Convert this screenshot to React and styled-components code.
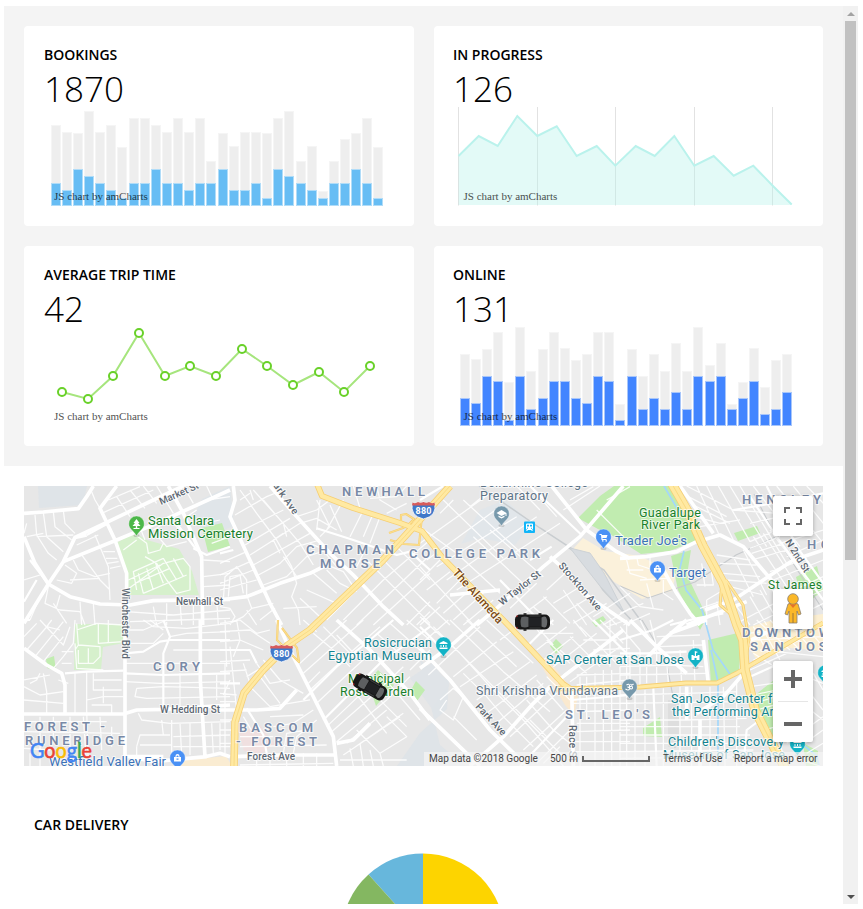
import React from "react";
import styled, { createGlobalStyle } from "styled-components";

const GlobalStyle = createGlobalStyle`
  * { box-sizing: border-box; }
  html, body { margin: 0; background: #fff; overflow: hidden; }
  body { font-family: "Open Sans", sans-serif; color: #000; }
  svg { display: block; }
`;

const Frame = styled.div`
  display: flex;
  width: 863px;
  height: 909px;
  padding: 6px 5px 5px 4px;
`;

const Content = styled.main`
  width: 839px;
  height: 898px;
  overflow: hidden;
`;

const CardGrid = styled.section`
  display: grid;
  grid-template-columns: 390px 389px;
  grid-auto-rows: 200px;
  gap: 20px;
  height: 460px;
  padding: 20px;
  background: #f4f4f4;
`;

const Card = styled.article`
  padding: 19px 0 0 ${(p) => p.$inset}px;
  background: #fff;
  border-radius: 4px;
  overflow: hidden;
`;

const Title = styled.h2`
  margin: 0;
  font-size: 14px;
  line-height: 20px;
  font-weight: 600;
`;

const Figure = styled.div`
  height: 41px;
  font-size: 35px;
  line-height: 47px;
  font-weight: 300;
`;

const ChartSvg = styled.svg`
  overflow: visible;
`;

const Credit = styled.text`
  font-family: "Liberation Serif", serif;
  font-size: 11px;
  fill: #000;
  opacity: 0.7;
`;

const ScrollTrack = styled.div`
  display: flex;
  flex-direction: column;
  align-items: center;
  width: 15px;
  height: 898px;
  background: #f1f1f1;
`;

const ScrollArrow = styled.div`
  display: flex;
  align-items: center;
  justify-content: center;
  width: 15px;
  height: 15px;
`;

const ScrollThumb = styled.div`
  width: 11px;
  height: 539px;
  margin-bottom: auto;
  background: #c1c1c1;
`;

const MapSection = styled.section`
  position: relative;
  width: 799px;
  height: 280px;
  margin: 20px 20px 0;
  overflow: hidden;
  background: #e7e7e7;
`;

const MapLabel = styled.text`
  font-family: Roboto, sans-serif;
  font-size: ${(p) => p.$size || 13}px;
  font-weight: ${(p) => p.$weight || 400};
  fill: ${(p) => p.$color};
  stroke: rgba(255, 255, 255, 0.7);
  stroke-width: 2px;
  stroke-linejoin: round;
  paint-order: stroke;
`;

const Logo = styled.text`
  font-family: Lato, sans-serif;
  font-size: 22px;
  font-weight: 400;
`;

const LogoLetter = styled.tspan`
  fill: ${(p) => p.$color};
  stroke: ${(p) => p.$color};
  stroke-width: 0.6px;
`;

const MapControls = styled.div`
  position: absolute;
  top: 10px;
  right: 10px;
  display: flex;
  flex-direction: column;
`;

const ControlButton = styled.button`
  display: flex;
  align-items: center;
  justify-content: center;
  width: 40px;
  height: 40px;
  margin: 0 0 ${(p) => p.$gap || 0}px;
  padding: 0;
  border: 0;
  border-radius: 2px;
  background: #fff;
  box-shadow: 0 1px 4px rgba(0, 0, 0, 0.3);
`;

const ZoomGroup = styled.div`
  display: flex;
  flex-direction: column;
  align-items: center;
  width: 40px;
  height: 81px;
  border-radius: 2px;
  background: #fff;
  box-shadow: 0 1px 4px rgba(0, 0, 0, 0.3);
`;

const ZoomButton = styled.button`
  display: flex;
  align-items: center;
  justify-content: center;
  width: 40px;
  height: ${(p) => p.$height}px;
  padding: 0 0 ${(p) => p.$lift}px;
  border: 0;
  background: transparent;
`;

const ZoomDivider = styled.div`
  width: 30px;
  height: 1px;
  background: #e6e6e6;
`;

const MapFooter = styled.footer`
  position: absolute;
  right: 0;
  bottom: 0;
  display: flex;
  align-items: center;
  height: 14px;
  font: 10px/14px Roboto, sans-serif;
  color: #444;
  background: rgba(245, 245, 245, 0.7);
  white-space: nowrap;
`;

const FooterCell = styled.span`
  width: ${(p) => p.$width}px;
  padding-left: 5px;
`;

const ScaleBar = styled.span`
  width: 68px;
  height: 6px;
  margin-right: 8px;
  border: solid #666;
  border-width: 0 2px 2px;
`;

const Delivery = styled.section`
  padding: 49px 30px 0;
`;

const PieSvg = styled.svg`
  margin: 18px 0 0 307px;
`;

const barX = (i) => 11 * i + (i >= 7) + (i >= 15) + (i >= 22);

function BarChart({ x, y, base, totals, values, fill, edge, credit }) {
  return (
    <ChartSvg width="350" height="100" viewBox={`${x} ${y} 350 100`} shapeRendering="crispEdges">
      {totals.map((top, i) => {
        const left = base + barX(i);
        const bottom = y + 100;
        const valueTop = values[i];
        return (
          <g key={i}>
            <rect x={left} y={top} width="10" height={bottom - top} fill="#f5f5f5" />
            <rect x={left + 1} y={top + 1} width="8" height={bottom - top - 2} fill="#eeeeee" />
            <rect x={left} y={valueTop} width="10" height={bottom - valueTop} fill={edge} />
            <rect x={left + 1} y={valueTop + 1} width="8" height={bottom - valueTop - 2} fill={fill} />
          </g>
        );
      })}
      <Credit x={credit} y={y + 94}>JS chart by amCharts</Credit>
    </ChartSvg>
  );
}

const bookingsTotals = [125, 132, 133, 111, 132, 125, 147, 118, 118, 125, 132, 118, 132, 118, 161, 133, 146, 132, 132, 133, 118, 111, 161, 146, 191, 161, 139, 133, 118, 147];
const bookingsValues = [183, 190, 169, 176, 183, 190, 198, 183, 183, 169, 183, 183, 190, 183, 183, 169, 190, 190, 183, 198, 169, 176, 183, 190, 198, 183, 183, 169, 183, 198];
const onlineTotals = [354, 359, 349, 332, 382, 327, 371, 349, 332, 348, 360, 354, 332, 332, 404, 349, 376, 354, 371, 343, 371, 327, 365, 343, 404, 382, 348, 387, 360, 354];
const onlineValues = [398, 403, 376, 381, 420, 376, 409, 398, 381, 381, 398, 403, 376, 381, 420, 376, 409, 398, 409, 392, 409, 376, 381, 376, 409, 398, 381, 414, 409, 392];

const progressLine = "458.5,156 478.7,136 497.7,146 517.3,116 537.3,136 556.7,126.3 576.7,156 596.7,146 615.3,165.7 635.7,146 654.7,156 674.3,136 694.3,165.7 713.7,156 733.7,175.7 753.3,165.7 772.7,185.7 791.7,204.5";

function AreaChart() {
  return (
    <ChartSvg width="350" height="100" viewBox="453 106 350 100">
      {[458, 537, 615, 694, 772].map((x) => (
        <rect key={x} x={x} y="107" width="1" height="98.500" fill="#e2e2e2" />
      ))}
      <polygon points={`${progressLine} 791.7,205 458.5,205`} fill="#baf2ec" fillOpacity="0.4" />
      <polyline points={progressLine} fill="none" stroke="#baf2ec" strokeWidth="2" />
      <Credit x="463.5" y="200">JS chart by amCharts</Credit>
    </ChartSvg>
  );
}

const trips = [[62, 392], [88, 399], [113, 376], [139, 333], [165, 376], [190, 366], [216, 376], [242, 349], [267, 366], [293, 385], [319, 372], [344, 392], [370, 366]];

function LineChart() {
  return (
    <ChartSvg width="350" height="100" viewBox="44 326 350 100">
      <polyline points={trips.join(" ")} fill="none" stroke="#a6e57d" strokeWidth="2" />
      {trips.map(([x, y]) => (
        <circle key={x} cx={x} cy={y} r="4" fill="#fff" stroke="#69d129" strokeWidth="2" />
      ))}
      <Credit x="54" y="420">JS chart by amCharts</Credit>
    </ChartSvg>
  );
}

/* Street geometry, drawn at three units per pixel in 200px wide tiles. */
const tiles = [
  {
    x: 20, y: 480,
    major: "M12 430L85 312L130 245L165 172L200 165M12 100L70 96L175 86L200 50L220 18M12 170L45 250L85 312L150 350L240 372L330 375L400 362L630 358M290 18L240 85L285 180L320 280L320 435M130 245L290 180L410 130L630 30M165 172L265 125L400 60L490 18M445 18L490 100L545 230L548 435",
    mid: "M200 165L265 130M520 205L560 225L630 200M470 130L530 210M12 365L50 300M85 312L30 240",
    minor: "M240 85L225 60L215 35M265 60L360 20M245 100L400 30M290 50L330 110M330 30L375 85M370 18L410 70M410 18L460 100M490 18L520 70M70 98L80 170L130 215M100 95L105 140L155 180M130 92L135 130L165 160M45 105L50 165L85 220L110 240M20 170L70 160M50 170L160 165M170 195L235 165M225 165L265 260L270 360M185 225L240 300L270 330M160 240L175 270L225 290L270 280M135 255L170 280L155 310L110 300M85 320L75 370L120 390L180 395L195 435M150 300L240 295M120 345L110 380M180 365L185 435M220 370L225 435M60 350L30 420M100 370L140 430M12 300L60 285M20 130L12 160M250 215L285 215M258 235L292 235M262 250L296 245M270 265L302 258M340 160L380 190L385 220L420 210L430 190M355 130L375 180M310 210L350 180M320 330L430 250L490 235L510 260L510 330L470 340L440 300M350 330L340 275L430 235M325 300L420 255M370 340L355 280M400 330L380 265M430 310L405 245M375 230L410 250L440 300M345 310L450 265M370 340L500 285M430 235L470 300M460 235L490 290M320 395L460 405L630 390M400 380L410 435M440 370L440 435M480 365L485 435M330 425L480 420L630 415M520 370L520 435M590 360L595 435M550 240L630 245M550 290L630 280M550 320L630 315M400 150L450 120L500 170M410 165L440 200L500 185M575 190L630 170M550 130L600 120M480 100L560 60L630 50M500 110L530 90M560 18L580 60",
  },
  {
    x: 220, y: 480,
    major: "M40 18L45 60L30 110L85 230L150 370L185 435M150 18L230 110L330 220L400 285L490 380L550 435M0 360L80 350L180 310L270 280L320 255",
    mid: "M290 145L400 180L530 225L570 215L630 270M40 210L0 220",
    minor: "M45 105L140 50L190 30M60 155L190 90M75 195L210 115M90 225L240 130M100 255L270 160M115 285L180 250L230 200L300 180M130 315L200 290L260 230L320 210M60 30L110 100L170 180L215 260L230 310L215 350L235 390L240 435M100 30L190 130L200 170M130 60L240 190L280 255M190 160L160 180L180 220M190 230L230 290M0 250L80 215M0 285L90 245M0 310L100 270M10 360L15 290L50 260L80 300L80 345M25 350L30 290L60 285L70 340M80 345L95 385L70 410L30 430M95 385L160 370M0 380L30 385L45 410L30 435M190 385L290 380M120 420L165 385M240 355L310 420M260 330L350 370M310 250L370 275L410 335M280 280L350 340M320 270L360 310L400 330M240 130L290 115L350 150M230 110L290 90L330 60M290 60L330 140L300 170M330 75L365 155M430 90L390 170M440 200L410 260M370 60L320 150M460 100L430 170M480 110L450 190M530 90L480 60L470 18M500 100L560 70M420 85L400 18M450 55L530 50L560 18M370 420L490 300L630 180M320 420L450 290M410 435L630 225M460 435L630 280M440 240L630 430M520 190L630 300M480 230L630 380M300 60L290 150M270 190L340 220M300 200L350 260M0 330L110 300M90 30L100 60M60 60L90 40M80 390L110 435M560 435L630 365M590 435L630 395",
  },
  {
    x: 420, y: 480,
    major: "M90 345L240 330M395 18L500 150L590 215L630 235M370 260L480 170L610 18M390 230L435 270L490 340L630 435M370 260L230 385L170 435",
    mid: "M0 60L70 18M330 18L485 165M240 300L370 435M330 240L395 200",
    minor: "M0 190L210 40M20 240L240 80M50 260L290 110M80 300L350 110M110 330L420 130M0 300L60 240M20 330L90 275M50 370L130 290M70 400L160 320M100 420L190 340M130 435L220 360M70 60L250 235M130 60L310 225M0 140L110 220L240 340M160 170L330 330M210 150L370 290M0 260L160 435M0 350L90 435M0 410L30 435M100 60L60 100M150 80L200 40M340 30L410 110M290 18L360 90M430 90L540 18M450 60L520 20M380 330L435 280M400 370L480 320M430 400L520 345M460 430L560 370M340 380L400 435M370 350L450 430M430 330L500 435M500 340L590 435M520 410L630 340M550 435L630 385M560 60L630 20M530 90L610 170M270 385L350 310M300 410L380 350M470 370L530 435M0 435L60 380",
  },
  {
    x: 620, y: 480,
    major: "M0 235L80 230L170 215L230 185L300 165L370 200L420 260L480 330L560 435M180 18L280 160M130 270L170 340L210 400L240 435M255 390L340 360L430 300L520 240L610 210M200 435L380 365",
    mid: "M390 50L470 170L610 360M340 90L430 75L610 40M150 435L230 415L310 400M440 18L530 200L610 310",
    minor: "M200 18L340 90L470 100M205 50L320 110M220 75L330 130M230 18L300 170M260 18L340 180M295 18L390 185M330 18L440 200M360 18L500 250M400 18L540 200M470 18L610 190M520 18L610 130M560 18L610 70M225 110L300 130M240 140L360 120M390 130L480 110M390 185L470 150M390 205L480 170M395 220L490 190M395 240L500 210M400 170L500 320M430 160L520 300M450 150L560 300M480 190L610 150M500 230L610 180M450 275L560 235M460 300L610 240M480 350L610 290M500 380L610 330M530 410L610 370M290 225L390 240M300 250L410 255M310 280L420 290M320 300L440 310M330 320L430 345M340 230L400 350M370 210L440 345M230 315L280 315L270 240M255 320L245 250M260 360L310 330M240 385L300 365M260 360L260 435M290 365L300 435M350 380L390 435M390 350L440 435M420 330L480 435M450 320L530 435M350 430L520 340M400 435L550 360M20 240L30 280L80 295M50 230L55 255L100 270M90 225L90 260L130 260M60 300L140 295M20 270L70 270M0 320L60 380L130 390M80 310L100 385M130 300L130 340L160 360M0 400L70 370M10 435L90 400",
  },
  {
    x: 20, y: 620,
    major: "M12 85L80 135L125 160L135 195L135 285M315 0L315 438M12 282L310 282L350 270L430 268L630 255M541 0L541 180L550 330L555 410L600 400L630 410M315 410L430 410M330 410L400 425L560 410",
    mid: "M135 160L200 155L310 152M315 100L370 95L420 65L450 60L630 60M315 160L430 165L630 160M430 0L450 50L430 100L430 270M12 0L30 0",
    minor: "M20 90L85 15M45 110L130 5M70 125L130 50M12 50L50 10M95 0L80 20L120 30M60 0L130 75L150 20M100 145L130 110L160 70L165 0M125 95L160 95M125 130L155 130M115 180L145 190M30 190L50 180L60 160M12 200L60 225L130 215M12 240L130 250M70 160L80 215L80 280M12 180L90 165M165 70L170 145L250 150M200 155L200 270L205 438M220 160L220 210L305 210M220 180L305 180M165 160L165 280M200 240L250 230L310 230M215 255L275 255L275 280M250 200L250 250M170 10L175 75L165 90M170 30L230 10L310 15M235 10L235 70L310 65M265 0L265 70M175 75L240 80L240 110L220 130L175 130L175 90M205 85L205 130M60 290L60 438M100 290L100 350M150 290L150 438M190 290L200 438M240 290L245 390M275 320L275 380M12 305L260 305M12 335L300 340M12 385L90 390M30 400L30 438M315 30L370 30L440 0M370 0L400 20L500 25L630 10M330 70L400 70L430 40M390 0L430 30M450 50L500 40L630 35M460 90L630 90M315 130L630 130M315 185L420 190L630 185M350 205L345 230L380 235L630 230M350 205L430 200L630 205M480 160L480 265M590 165L590 240M610 225L630 180M355 280L365 300L450 310L630 305M350 380L360 345L450 345M350 380L350 405M455 300L455 405M480 310L485 405M510 310L510 405M575 310L580 400M600 310L600 390M360 375L455 375M460 350L630 345M460 380L630 380M425 300L430 345",
  },
  {
    x: 220, y: 620,
    major: "M170 0L210 90L270 210L340 350L350 438M0 270L110 270L180 265L230 210M350 370L400 360L450 310M350 0L450 90L570 220L630 300M40 410L180 405L350 405",
    mid: "M80 265L130 345L140 400M250 240L350 140L450 60L520 0M310 300L400 210L480 130L630 20M110 130L90 90L0 90M0 190L60 190",
    minor: "M0 10L60 0L110 40L150 30M0 35L90 30L150 70M0 65L60 60L130 90M0 125L90 120M0 155L80 150M0 220L50 225M0 245L45 245M0 300L40 300M0 330L40 330M0 370L35 370M50 0L60 60L40 110M15 0L20 140M70 130L90 190M30 80L50 270M15 130L15 400M240 130L380 0M250 160L430 0M265 190L300 155M270 210L400 90L480 20M290 250L380 165L440 110M320 320L430 215M330 340L460 225L550 140M350 365L500 240L570 170M380 370L500 270M400 385L550 280M370 405L540 290M410 330L480 400L560 350L500 290M250 0L290 35M280 40L340 90L390 140M310 20L400 110M350 45L420 120M430 70L510 150M470 40L560 120M510 10L600 90M560 0L630 60M260 330L200 340L190 400M280 270L220 310L160 320M290 300L230 350L220 400M150 290L250 285M70 290L100 340M60 350L160 350M60 380L320 375M110 400L110 438M150 400L150 438M200 400L200 438M250 400L250 438M290 400L290 438M60 435L340 430M390 385L400 438M420 370L430 438M450 390L460 438M480 400L490 438M360 420L560 420M400 210L500 340M440 200L560 320M480 160L600 300M110 130L150 190L210 180M120 170L180 250M90 200L150 260L270 240M130 120L180 180L250 220M630 90L570 150M80 170L130 140",
  },
  {
    x: 420, y: 620,
    major: "M0 85L90 180L210 330L320 438M0 265L150 410L180 438M180 0L95 75L0 145M410 185L520 100L610 30M455 200L460 438M390 200L340 250L250 350L150 438",
    mid: "M300 438L440 290M400 0L320 80M520 0L620 100M0 20L60 80M455 240L630 225",
    minor: "M0 75L85 0M40 20L180 160L350 330L440 420M90 0L250 155L390 275M140 0L290 140M200 0L340 130M25 165L180 20M100 170L230 65M120 200L280 95M170 240L330 125M200 280L350 165M230 310L370 190M270 350L410 220M310 390L440 270M350 430L450 330M10 0L120 100L220 210L310 300L430 438M60 240L100 205L130 230L100 300L60 270L80 240M100 290L170 360M130 160L200 230L250 290L340 380M320 240L400 330L450 370M240 60L320 0M350 90L440 20M370 120L460 50M400 140L530 40M430 165L570 60M450 185L600 80M480 20L590 130M450 50L540 140M420 90L500 160M380 60L450 130M360 30L400 75M330 0L360 40L460 40M460 0L500 50M540 0L610 70M560 20L620 0M480 170L480 438M500 170L500 300M525 160L525 438M550 150L550 438M575 150L575 438M600 140L600 438M470 195L630 180M470 165L630 160M460 250L630 250M470 275L630 270M470 310L630 310M470 335L630 330M465 365L630 365M465 395L630 395M380 350L330 300M420 380L370 430M350 180L430 270M380 170L450 240M490 60L590 60M570 0L570 140M520 90L630 85M520 105L630 110",
  },
  {
    x: 620, y: 620,
    major: "M30 0L110 80L200 160M200 0L130 60L70 125M150 40L260 0M250 60L265 190M200 200L200 300M240 300L240 438M370 70L480 20L560 0M380 150L310 230L230 280",
    mid: "M0 60L100 30L160 0M0 100L80 100L200 95M390 170L480 130M100 205L110 438M420 300L380 330L370 438",
    minor: "M0 20L60 90L60 200M20 0L20 190M60 0L90 60M90 0L110 80M110 50L240 45M120 80L250 75M0 140L150 135L250 140M30 100L30 190M80 110L80 190M110 90L110 195M140 120L145 190M180 90L185 190M220 60L225 190M0 165L260 160M0 225L200 220L350 215M0 250L370 245M0 300L200 300L380 295M0 320L360 320M0 345L390 345M0 370L400 370M0 395L400 390M0 415L450 410M20 210L20 438M45 210L45 438M75 210L75 438M130 205L130 438M180 200L180 438M215 200L215 438M270 200L270 438M310 200L315 438M350 180L350 438M400 100L480 150M400 120L540 60M390 150L500 100M430 30L480 120M400 20L450 110M410 0L510 90M450 0L540 90M500 0L560 70M540 0L609 80M380 40L609 20M400 60L609 50M420 90L609 110M460 130L609 190M390 200L460 190M400 225L470 210M400 250L470 230M410 270L480 250M540 180L609 270M560 260L609 300M580 160L609 210M500 370L609 290M540 380L609 330M560 400L609 370M470 340L500 438M510 410L600 438M430 330L470 320",
  },
];

function Tile({ tile }) {
  return (
    <g transform={`translate(${tile.x} ${tile.y}) scale(.33333)`} fill="none" stroke="#fff" strokeLinejoin="round">
      <path d={tile.minor} strokeWidth="3.800" strokeOpacity="0.88" />
      <path d={tile.mid} strokeWidth="6.500" />
      <path d={tile.major} strokeWidth="11" />
    </g>
  );
}

const highways = [
  { d: "M450 486L406 535L383 560L310 630L288 645L263 670L244 693L235 722L234 766", w: 7.5 },
  { d: "M317 484L322 496L353 508L400 523L422 531L442 557L510 627L563 684L572 690", w: 6 },
  { d: "M556 689L640 687L686 683L717 683L737 673L780 648L823 623", w: 4.8 },
  { d: "M672 484L687 510L703 546L723 583L737 625L743 640L745 670L755 710L769 738L785 768", w: 9.5 },
  { d: "M722 582L720 605L733 616L745 630M726 580L743 605L749 640L744 668L755 700", w: 3 },
  { d: "M278 620L277 640L299 662L297 648L282 628", w: 2.2 },
  { d: "M389 533L403 528L422 516L419 545L404 544L390 540M401 515L406 514L414 519L407 526L401 522Z", w: 2.2 },
];

function Highways() {
  return (
    <g fill="none" strokeLinejoin="round">
      {highways.map((h) => <path key={h.d} d={h.d} stroke="#f6cf73" strokeWidth={h.w} />)}
      {highways.map((h) => <path key={h.d} d={h.d} stroke="#ffe9a2" strokeWidth={h.w - 1.6} />)}
      <path d={highways[0].d} stroke="#f8d77f" strokeWidth="0.8" />
      <path d={highways[3].d} stroke="#f8d77f" strokeWidth="0.9" />
    </g>
  );
}

function Parks() {
  return (
    <g>
      <path d="M38 486L87 486L83 505L39 508Z" fill="#dfe4e8" />
      <path d="M202 499L230 486L234 526L207 537L194 516Z" fill="#e0e5e9" />
      <path d="M480 510L505 500L532 523L515 545L480 538L461 544Z" fill="#e1e6ea" />
      <path d="M420 660L449 681L447 709L420 733L397 766L465 766L440 745Z" fill="#dfe4e8" />
      <path d="M410 678L432 663L449 685L432 709Z" fill="#e0e4e8" />
      <g fill="#d6f0cc">
        <path d="M116 543L135 533L147 540L179 549L192 571L199 595L128 595L126 570Z" />
        <path d="M75 624L124 624L124 643L103 647L101 670L74 670Z" />
      </g>
      <g fill="#c1ecb0">
        <path d="M202 528L222 523L230 546L208 552Z" />
        <path d="M46 659L54 656L56 671L47 668Z" />
        <path d="M578 518L600 496L614 486L669 486L696 530L697 540L670 551L641 554L613 536L598 529Z" />
        <path d="M734 533L757 526L760 533L738 541Z" />
        <path d="M671 556L691 550L687 575L707 617L700 630L678 590Z" />
        <path d="M708 640L742 632L739 671L711 683Z" />
        <path d="M368 682L378 670L394 685L376 706Z" />
        <path d="M411 690L416 681L425 690L417 701Z" />
        <path d="M550 646L556 639L563 646L556 654Z" />
        <path d="M643 728L660 717L662 737L643 736Z" />
        <path d="M592 622L603 616L606 620L596 627Z" />
        <path d="M754 696L774 680L784 720L772 738L758 725Z" />
        <path d="M796 577L817 566L823 590L804 606Z" />
        <path d="M803 743L818 751L818 766L806 766Z" />
      </g>
      <path d="M573 549L583 538L605 551L640 556L676 574L672 591L642 599L611 580Z" fill="#fbf1db" />
      <path d="M739 630L770 621L823 614L823 651L790 648L758 662Z" fill="#fcefd2" />
      <path d="M542 667L550 662L578 696L574 716L565 705Z" fill="#fae9cf" />
      <path d="M179 761L226 756L232 766L174 766Z" fill="#faecd2" />
      <path d="M239 732L260 725L275 744L261 754L244 751Z" fill="#f0e0e0" />
    </g>
  );
}

function RailAndWater() {
  return (
    <g fill="none">
      <path d="M664 486L678 510L697 520M684 551L680 568L686 590L702 610L713 650L732 677M711 650L718 682L718 766M797 740L817 756L819 766" stroke="#a4d7fb" strokeWidth="1.7" />
      <path d="M479 486L540 528L580 554L603 590L636 625M566 546L604 570L641 621" stroke="#c9cdd0" strokeWidth="1.5" />
      <path d="M570 548L590 553L604 573L624 612L600 586Z" fill="#d8dce0" stroke="#cdd2d6" />
      <path d="M620 586L648 598L695 582L736 555L780 535M642 620L666 660L674 702L675 748M754 494L775 535L823 610" stroke="#c7cacd" strokeWidth="1.1" />
      <path d="M668 700L679 700L679 747L668 747Z" fill="#dedede" />
    </g>
  );
}

const green = "#18802b";
const blue = "#3c72b8";
const teal = "#128390";
const slate = "#5d7488";
const area = "#7889a6";
const street = "#5d6873";

const labels = [
  ["Santa Clara", 148, 525, 66, green],
  ["Mission Cemetery", 148, 538, 105, green],
  ["Newhall St", 176, 605, 47, street, 10, 500],
  ["NEWHALL", 342, 496, 83, area, 13, 600],
  ["CHAPMAN", 306, 554, 88, area, 13, 600],
  ["MORSE", 320, 568, 60, area, 13, 600],
  ["COLLEGE PARK", 409, 558, 131, area, 13, 600],
  ["Bellarmine College", 480, 487, 108, slate, 12.5],
  ["Preparatory", 480, 500, 68, slate, 12.5],
  ["Guadalupe", 639, 517, 62, green, 12.5],
  ["River Park", 641, 529, 59, green, 12.5],
  ["Trader Joe's", 615, 545, 72, blue],
  ["Target", 669, 577, 37, blue],
  ["HENSLEY", 742, 504, 79, area, 13, 600],
  ["HOLLY", 807, 549, 57, area, 13, 600],
  ["St James", 768, 589, 54, green, 12],
  ["DOWNTOWN", 742, 637, 101, area, 13, 600],
  ["SAN JOSE", 750, 651, 88, area, 13, 600],
  ["CORY", 153, 671, 47, area, 13, 600],
  ["W Hedding St", 160, 713, 60, street, 10, 500],
  ["FOREST -", 24, 731, 81, area, 13, 600],
  ["RUNERIDGE", 25, 745, 100, area, 13, 600],
  ["Westfield Valley Fair", 49, 766, 117, blue],
  ["Forest Ave", 247, 760, 48, street, 10, 500],
  ["BASCOM", 239, 732, 74, area, 13, 600],
  ["- FOREST", 236, 746, 81, area, 13, 600],
  ["Rosicrucian", 364, 647, 68, teal, 12.5],
  ["Egyptian Museum", 328, 660, 104, teal, 12.5],
  ["Municipal", 348, 683, 56, green, 12.5],
  ["Rose Garden", 340, 696, 74, green, 12.5],
  ["Shri Krishna Vrundavana", 476, 695, 142, slate, 12.5],
  ["ST. LEO'S", 565, 719, 85, area, 13, 600],
  ["SAP Center at San Jose", 546, 664, 138, teal],
  ["San Jose Center for", 671, 703, 113, teal, 12.5],
  ["the Performing Arts", 672, 716, 113, teal, 12.5],
  ["Children's Discovery", 668, 746, 116, teal, 12.5],
  ["Museum of San Jose", 663, 759, 122, teal, 12.5],
];

const turnedLabels = [
  ["Market St", 161, 505, 42, -24, 10, street],
  ["Winchester Blvd", 122, 588, 71, 90, 10, street],
  ["Park Ave", 269, 480, 43, 55, 10, street],
  ["W Taylor St", 502, 606, 50, -38, 10, street],
  ["Stockton Ave", 558, 566, 60, 49, 10, street],
  ["The Alameda", 452, 573, 69, 48, 11.5, "#7b4a15"],
  ["N 2nd St", 785, 542, 37, 58, 10, street],
  ["Park Ave", 475, 707, 40, 47, 10, street],
  ["Race St", 569, 725, 36, 90, 10, street],
];

function Labels() {
  return (
    <g>
      {turnedLabels.map(([text, x, y, length, angle, size, color]) => (
        <MapLabel key={text + x} transform={`translate(${x} ${y}) rotate(${angle})`} textLength={length} $size={size} $color={color} $weight={500}>{text}</MapLabel>
      ))}
      {labels.map(([text, x, y, length, color, size, weight]) => (
        <MapLabel key={text + y} x={x} y={y} textLength={length} $color={color} $size={size} $weight={weight}>{text}</MapLabel>
      ))}
    </g>
  );
}

const glyphs = {
  tree: <path d="M0-5L3-1H1.5L4 2H.7V4H3V5H-3V4H-.7V2H-4L-1.5-1H-3Z" />,
  school: <path d="M-5-1L0-4L5-1V2H4V0L0 2ZM-3 1.5L0 3L3 1.5V3L0 4.5L-3 3Z" />,
  cart: <path d="M-4-3H-2L-1.5-2H4L3 1H-1L-1 2H3V3H-2L-2.5-2H-4ZM-1.5 3.2H0V4.5H-1.5ZM2 3.2H3.5V4.5H2Z" />,
  bag: <path fillRule="evenodd" d="M-3.5-1H-2V-2Q-2-4 0-4T2-2V-1H3.5V3.5H-3.5ZM-1-1H1V-2Q0-3.2-1-2ZM-1 .5V1.7H1V.5Z" />,
  museum: <path d="M0-4L4-2V-1H-4V-2ZM-3 0H-2V2H-3ZM-.5 0H.5V2H-.5ZM2 0H3V2H2ZM-4 2.5H4V4H-4Z" />,
  arena: <path d="M-4-1H-2V0H-.7V-5L2.500-4L.5-3V0H2V-1H4V4H1V2H-1V4H-4Z" />,
  om: <path d="M-3-2Q0-4 0-1Q0 1-2 0Q1 0 0 2Q-1 4-4 2M0 0Q3-2 3 1Q2 3 0 1M1-3Q2-1 4-3" fill="none" stroke="#fff" strokeWidth="1.1" />,
};

const pins = [
  [136.5, 524, "#4cb749", "tree"],
  [501.5, 514, "#7799ac", "school"],
  [603.5, 537, "#4a91f5", "cart"],
  [657.5, 569, "#4a91f5", "bag"],
  [443.5, 645, "#13b3c6", "museum"],
  [695.5, 656, "#13b3c6", "arena"],
  [629.5, 687, "#7799ac", "om"],
  [177.5, 758, "#4a91f5", "bag"],
  [797.5, 744, "#13b3c6", "museum"],
  [825.5, 673, "#13b3c6", "museum"],
];

function Pin({ x, y, color, glyph }) {
  return (
    <g transform={`translate(${x} ${y})`}>
      <ellipse cy="11.500" rx="3" ry="1.500" fill="#000" opacity=".15" />
      <path d="M0-8A7.7 7.7 0 0 1 7.7 0C7.7 5 3 6.5 0 12C-3 6.5-7.7 5-7.7 0A7.7 7.7 0 0 1 0-8Z" fill={color} stroke="#fff" strokeOpacity=".6" strokeWidth=".6" />
      <g fill="#fff">{glyphs[glyph]}</g>
    </g>
  );
}

const ShieldNumber = styled.text`
  font-family: Roboto, sans-serif;
  font-size: 9px;
  font-weight: 700;
  fill: #fff;
  text-anchor: middle;
`;

function Shield({ x, y }) {
  return (
    <g transform={`translate(${x} ${y})`}>
      <path d="M-11-7Q-8-5-5.5-7.5Q-3-6 0-8Q3-6 5.5-7.5Q8-5 11-7Q14 6 0 9Q-14 6-11-7Z" fill="#3f78c9" stroke="#fff" strokeWidth=".8" />
      <path d="M-11-7.5Q-8-6-5.5-8Q-3-6.5 0-8Q3-6.5 5.5-8Q8-6 11-7.5L11.5-4.5H-11.5Z" fill="#d75b5b" />
      <ShieldNumber y="3.700" textLength="16">880</ShieldNumber>
    </g>
  );
}

function Car({ x, y, angle }) {
  return (
    <g transform={`translate(${x} ${y}) rotate(${angle})`}>
      <rect x="-17.500" y="-7.500" width="35" height="15" rx="5" fill="#171717" />
      <path d="M-9-8H-6M9-8H6M-9 8H-6" stroke="#111" strokeWidth="1.500" />
      <path d="M-11-5Q-7-6-4-4.8V4.8Q-7 6-11 5Q-13 0-11-5Z" fill="#5d5f61" />
      <path d="M9-4.5Q12-6 13.5-5Q16 0 13.5 5Q12 6 9 4.5Z" fill="#66686a" />
      <path d="M-3-6H8M-3 6H8" stroke="#3a3c3e" strokeWidth="1" />
      <rect x="-3.500" y="-4.500" width="12" height="9" rx="1" fill="#202124" />
      <path d="M-16-5L-15-6.5M-16 5L-15 6.5" stroke="#b12b2b" strokeWidth="1.200" />
    </g>
  );
}

function CityMap() {
  return (
    <svg width="799" height="280" viewBox="24 486 799 280">
      <Parks />
      <RailAndWater />
      {tiles.map((tile) => <Tile key={`${tile.x}-${tile.y}`} tile={tile} />)}
      <Highways />
      <Labels />
      <Shield x={423.5} y={510} />
      <Shield x={281.5} y={653} />
      {pins.map(([x, y, color, glyph]) => <Pin key={`${x}-${y}`} x={x} y={y} color={color} glyph={glyph} />)}
      <g transform="translate(524 521.5)">
        <rect width="11" height="11.500" rx="1" fill="#11b5f8" />
        <path fillRule="evenodd" fill="#fff" d="M3 2H8Q9 2 9 3V7Q9 8 8 8.2L9 9.5H8L7 8.5H4L3 9.5H2L3 8.2Q2 8 2 7V3Q2 2 3 2ZM3 3.2V5H5V3.2ZM6 3.2V5H8V3.2ZM3 6.2V7.2H4V6.2ZM7 6.2V7.2H8V6.2Z" />
      </g>
      <Car x={532.5} y={622} angle={0} />
      <Car x={370} y={687} angle={30} />
      <Logo x="30" y="758" textLength="62" lengthAdjust="spacingAndGlyphs">
        <LogoLetter $color="#4285f4">G</LogoLetter>
        <LogoLetter $color="#ea4335">o</LogoLetter>
        <LogoLetter $color="#fbbc05">o</LogoLetter>
        <LogoLetter $color="#4285f4">g</LogoLetter>
        <LogoLetter $color="#34a853">l</LogoLetter>
        <LogoLetter $color="#ea4335">e</LogoLetter>
      </Logo>
    </svg>
  );
}

function Pegman() {
  return (
    <svg width="20" height="32" viewBox="0 0 20 32">
      <g fill="#fbb829" stroke="#8a7f70" strokeWidth=".8">
        <path d="M5 11Q10 8 15 11L18 21L15.5 22L14 18V30H6V18L4.5 22L2 21Z" />
        <circle cx="10" cy="6" r="5.300" />
      </g>
      <path d="M6 10.5L10 15L14 10.5Q10 12.5 6 10.5Z" fill="#e5732c" />
      <path d="M10 20V30" stroke="#9c763b" strokeWidth="1" />
    </svg>
  );
}

export default function App() {
  return (
    <>
      <GlobalStyle />
      <Frame>
        <Content>
          <CardGrid>
            <Card $inset={20}>
              <Title>BOOKINGS</Title>
              <Figure>1870</Figure>
              <BarChart x={44} y={106} base={51} credit={54} totals={bookingsTotals} values={bookingsValues} fill="#67bdf4" edge="#b0dcf8" />
            </Card>
            <Card $inset={19}>
              <Title>IN PROGRESS</Title>
              <Figure>126</Figure>
              <AreaChart />
            </Card>
            <Card $inset={20}>
              <Title>AVERAGE TRIP TIME</Title>
              <Figure>42</Figure>
              <LineChart />
            </Card>
            <Card $inset={19}>
              <Title>ONLINE</Title>
              <Figure>131</Figure>
              <BarChart x={453} y={326} base={460} credit={463.5} totals={onlineTotals} values={onlineValues} fill="#4285ff" edge="#a8c6fa" />
            </Card>
          </CardGrid>
          <MapSection>
            <CityMap />
            <MapControls>
              <ControlButton $gap={53} aria-label="Toggle fullscreen view">
                <svg width="18" height="18" viewBox="0 0 18 18" fill="none" stroke="#666" strokeWidth="2">
                  <path d="M1 6V1H6M12 1H17V6M17 12V17H12M6 17H1V12" />
                </svg>
              </ControlButton>
              <ControlButton $gap={32} aria-label="Street view"><Pegman /></ControlButton>
              <ZoomGroup>
                <ZoomButton $height={40} $lift={4} aria-label="Zoom in">
                  <svg width="18" height="18" viewBox="0 0 18 18" fill="none" stroke="#666" strokeWidth="4"><path d="M0 9H18M9 0V18" /></svg>
                </ZoomButton>
                <ZoomDivider />
                <ZoomButton $height={40} $lift={0} aria-label="Zoom out">
                  <svg width="18" height="10" viewBox="0 0 18 10" fill="none" stroke="#666" strokeWidth="4"><path d="M0 7H18" /></svg>
                </ZoomButton>
              </ZoomGroup>
            </MapControls>
            <MapFooter>
              <FooterCell $width={121}>Map data ©2018 Google</FooterCell>
              <FooterCell $width={37}>500 m</FooterCell>
              <ScaleBar />
              <FooterCell $width={71}>Terms of Use</FooterCell>
              <FooterCell $width={94}>Report a map error</FooterCell>
            </MapFooter>
          </MapSection>
          <Delivery>
            <Title>CAR DELIVERY</Title>
            <PieSvg width="164" height="164" viewBox="-82 -82 164 164">
              <path d="M0 0V-81.5A81.5 81.5 0 0 1 81.5 0Z" fill="#fdd400" />
              <path d="M0 0L-54.5-60.5A81.5 81.5 0 0 1 0-81.5Z" fill="#67b7dc" />
              <path d="M0 0L-81.5 0A81.5 81.5 0 0 1-54.5-60.5Z" fill="#84b761" />
            </PieSvg>
          </Delivery>
        </Content>
        <ScrollTrack>
          <ScrollArrow>
            <svg width="8" height="4" viewBox="0 0 8 4"><path d="M4 0L8 4H0Z" fill="#a3a3a3" /></svg>
          </ScrollArrow>
          <ScrollThumb />
          <ScrollArrow>
            <svg width="8" height="4" viewBox="0 0 8 4"><path d="M0 0H8L4 4Z" fill="#505050" /></svg>
          </ScrollArrow>
        </ScrollTrack>
      </Frame>
    </>
  );
}
